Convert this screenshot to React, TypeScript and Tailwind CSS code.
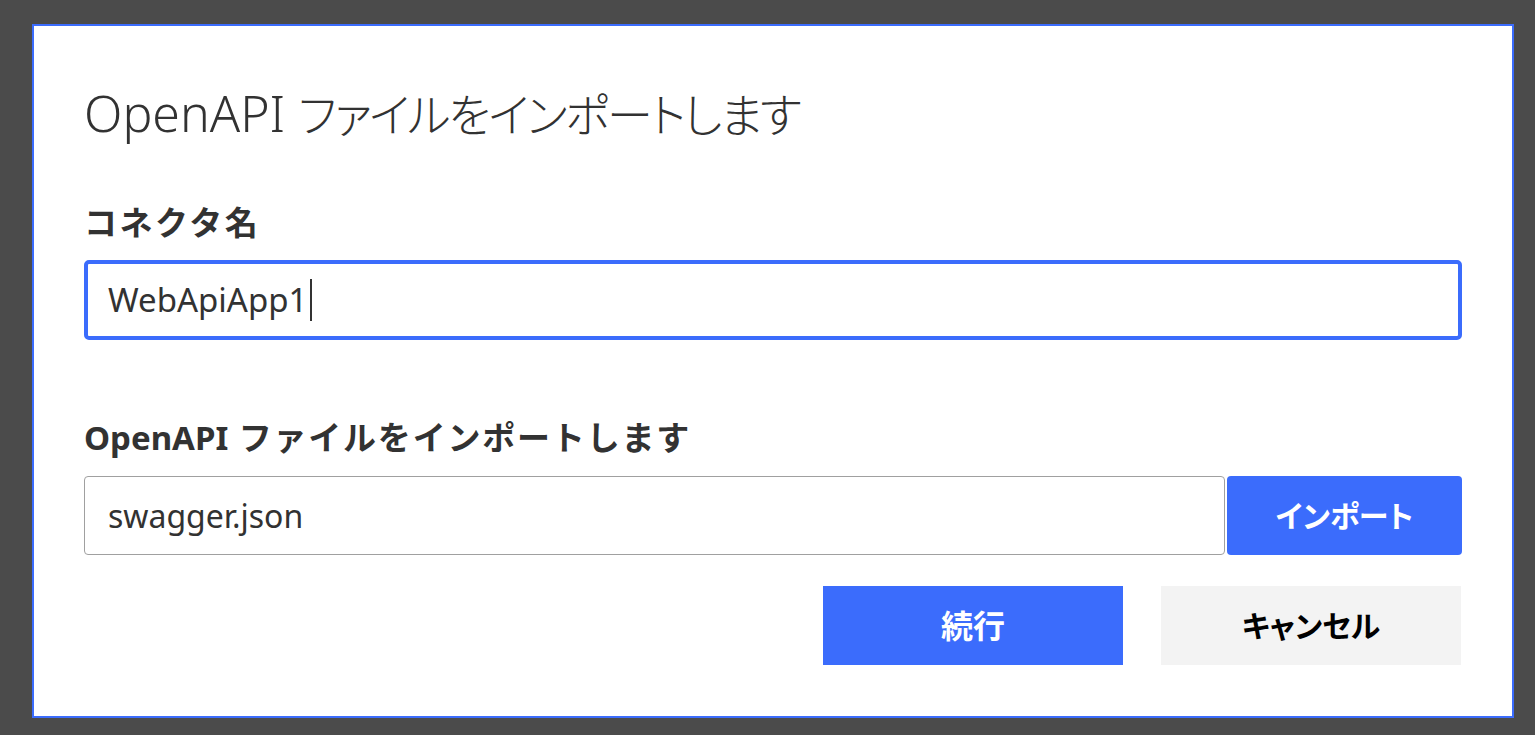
const FONT = "font-['Noto_Sans','Noto_Sans_CJK_JP',sans-serif]"

export default function App() {
  return (
    <div className={`min-h-screen bg-[#4b4b4b] pt-[24px] pl-[32px] ${FONT}`}>
      <div className="w-[1482px] h-[694px] border-2 border-[#3b6cfc] bg-white px-[50px] pt-[55px] text-[#323232]">
        {/* title */}
        <h1 className="h-[64px] text-[50px] leading-[64px] font-light whitespace-nowrap">
          OpenAPI{' '}
          <span className="text-[46px] tracking-[-2.3px] [font-feature-settings:'palt']">ファイルをインポートします</span>
        </h1>

        {/* connector name */}
        <div className="mt-[58px] text-[33px] leading-[40px] font-bold tracking-[2.5px]">コネクタ名</div>
        <div className="mt-[17px] h-[80px] rounded-[5px] border-4 border-[#3b6cfc] pl-[20px] flex items-center">
          <span className="text-[33px] leading-[40px]">WebApiApp1</span>
          <span className="ml-[3px] w-[2px] h-[42px] bg-[#323232]" />
        </div>

        {/* file import */}
        <div className="mt-[78px] text-[33px] leading-[40px] font-bold tracking-[1.8px]">
          <span className="tracking-normal">OpenAPI</span> ファイルをインポートします
        </div>
        <div className="mt-[18px] flex gap-[2px] h-[79px]">
          <div className="flex-1 rounded-[4px] border border-[#a0a0a0] pl-[23px] flex items-center text-[32px]">
            swagger.json
          </div>
          <button className="w-[235px] rounded-[4px] bg-[#3b6cfc] text-white text-[30px] font-bold [font-feature-settings:'palt']">
            インポート
          </button>
        </div>

        {/* actions */}
        <div className="mt-[31px] flex justify-end gap-[38px] pr-[1px]">
          <button className="w-[300px] h-[79px] bg-[#3b6cfc] text-white text-[32px] font-bold">続行</button>
          <button className="w-[300px] h-[79px] bg-[#f3f3f3] text-black text-[30px] font-bold [font-feature-settings:'palt']">
            キャンセル
          </button>
        </div>
      </div>
    </div>
  )
}
